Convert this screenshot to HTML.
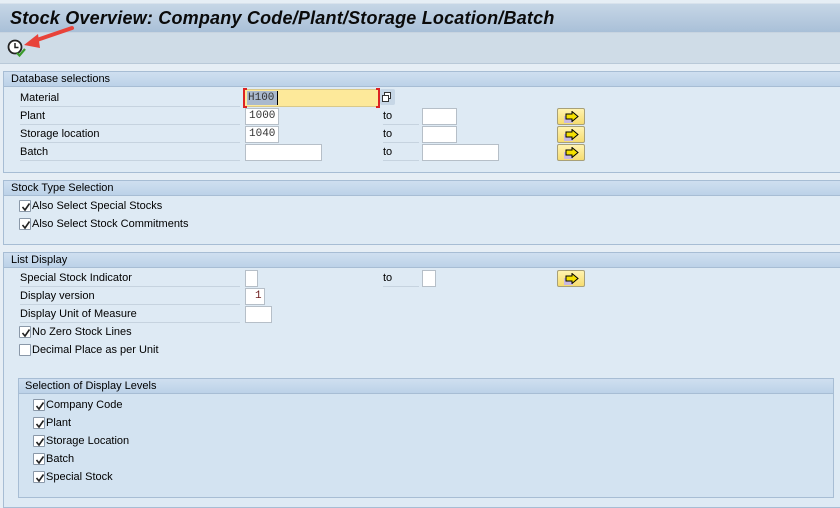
<!DOCTYPE html>
<html><head><meta charset="utf-8"><style>
*{margin:0;padding:0;box-sizing:border-box}
body{width:840px;height:499px;overflow:hidden;background:#e6eef5;font-family:"Liberation Sans",sans-serif;font-size:11px;color:#000;position:relative}
.a{position:absolute}
.title{left:0;top:3px;width:840px;height:30px;background:linear-gradient(#c6d6e6,#a9c0d8);border-top:1px solid #d8e2ec;border-bottom:1px solid #c8d4e0}
.title span{position:absolute;left:10px;top:4px;font-size:18px;font-weight:bold;font-style:italic;color:#0a0a0a;letter-spacing:0.2px}
.tb{left:0;top:33px;width:840px;height:31px;background:#cfdce7;border-bottom:1px solid #b9c9d8}
.hdr{left:3px;width:840px;height:16px;background:linear-gradient(#cfdff0,#bcd2e8);border:1px solid #a7bdd4;border-right:none;padding-left:7px;line-height:14px;font-size:11px}
.box{left:3px;width:840px;background:#deeaf4;border:1px solid #a7bdd4;border-top:none;border-right:none}
.lbl{left:20px;width:220px;height:17px;line-height:16px;border-bottom:1px solid #c6d3df}
.to{left:383px;width:36px;height:17px;line-height:16px;border-bottom:1px solid #c6d3df}
.in{height:17px;background:#fff;border:1px solid #b6bfc8;font-family:"Liberation Mono",monospace;font-size:11px;line-height:15px;padding-left:3px;color:#333}
.btn{left:557px;width:28px;height:17px;background:linear-gradient(#fff3b0,#f6dc70);border:1px solid #a8a078;border-radius:2px}
.btn i{position:absolute;left:6px;top:7px;width:9px;height:7px;background:#c8b8e0}
.btn svg{position:absolute;left:7px;top:2px}
.cb{width:12px;height:12px;background:#fff;border:1px solid #8a98a8;border-radius:1px}
.cb svg{position:absolute;left:1px;top:1px}
.ct{height:14px;line-height:14px}
</style></head><body>
<div class="a title"><span>Stock Overview: Company Code/Plant/Storage Location/Batch</span></div>
<div class="a tb"></div>
<svg class="a" style="left:6px;top:38px" width="20" height="20" viewBox="0 0 20 20">
<circle cx="9" cy="9" r="6.5" fill="#fff" stroke="#222" stroke-width="1.8"/>
<path d="M9 5v4.5h3.5" stroke="#222" stroke-width="1.5" fill="none"/>
<path d="M11 15l2.5 2.5L19 11" stroke="#3a9a2a" stroke-width="2.2" fill="none"/>
</svg>
<svg class="a" style="left:20px;top:24px" width="56" height="28" viewBox="0 0 56 28">
<path d="M52 4L14 17" stroke="#e8433a" stroke-width="4" stroke-linecap="round"/>
<path d="M4 21L18 10L20 24Z" fill="#e8433a"/>
</svg>

<div class="a hdr" style="top:71px">Database selections</div>
<div class="a box" style="top:87px;height:86px"></div>
<div class="a lbl" style="top:90px">Material</div>
<div class="a" style="left:244px;top:89px;width:135px;height:18px;background:#fde99a;border:1px solid #d9c98a"></div>
<div class="a" style="left:247px;top:91px;width:30px;height:14px;background:#aab9cd;font-family:'Liberation Mono',monospace;font-size:11px;line-height:14px;color:#333;padding-left:1px">H100</div>
<div class="a" style="left:277px;top:91px;width:1px;height:14px;background:#000"></div>
<div class="a" style="left:243px;top:88px;width:4px;height:20px;border:2px solid #d22;border-right:none"></div>
<div class="a" style="left:376px;top:88px;width:4px;height:20px;border:2px solid #d22;border-left:none"></div>
<div class="a" style="left:380px;top:89px;width:15px;height:16px;background:#c7d7e6;border-radius:2px"></div>
<div class="a" style="left:384px;top:92px;width:7px;height:7px;border:1px solid #333;background:#fff"></div>
<div class="a" style="left:382px;top:95px;width:7px;height:7px;border:1px solid #333;background:#fff"></div>

<div class="a lbl" style="top:108px">Plant</div>
<div class="a in" style="left:245px;top:108px;width:34px">1000</div>
<div class="a to" style="top:108px">to</div>
<div class="a in" style="left:422px;top:108px;width:35px"></div>
<div class="a btn" style="top:108px"><i></i><svg width="14" height="11" viewBox="0 0 14 11"><path d="M1 3h6V0.5L13 5.5 7 10.5V8H1Z" fill="#f4e000" stroke="#000" stroke-width="1"/></svg></div>

<div class="a lbl" style="top:126px">Storage location</div>
<div class="a in" style="left:245px;top:126px;width:34px">1040</div>
<div class="a to" style="top:126px">to</div>
<div class="a in" style="left:422px;top:126px;width:35px"></div>
<div class="a btn" style="top:126px"><i></i><svg width="14" height="11" viewBox="0 0 14 11"><path d="M1 3h6V0.5L13 5.5 7 10.5V8H1Z" fill="#f4e000" stroke="#000" stroke-width="1"/></svg></div>

<div class="a lbl" style="top:144px">Batch</div>
<div class="a in" style="left:245px;top:144px;width:77px"></div>
<div class="a to" style="top:144px">to</div>
<div class="a in" style="left:422px;top:144px;width:77px"></div>
<div class="a btn" style="top:144px"><i></i><svg width="14" height="11" viewBox="0 0 14 11"><path d="M1 3h6V0.5L13 5.5 7 10.5V8H1Z" fill="#f4e000" stroke="#000" stroke-width="1"/></svg></div>

<div class="a hdr" style="top:180px">Stock Type Selection</div>
<div class="a box" style="top:196px;height:49px"></div>
<div class="a cb" style="left:19px;top:200px"><svg width="10" height="10"><path d="M1.5 5l2.5 3L8.5 1.5" stroke="#222" stroke-width="1.6" fill="none"/></svg></div>
<div class="a ct" style="left:32px;top:199px">Also Select Special Stocks</div>
<div class="a cb" style="left:19px;top:218px"><svg width="10" height="10"><path d="M1.5 5l2.5 3L8.5 1.5" stroke="#222" stroke-width="1.6" fill="none"/></svg></div>
<div class="a ct" style="left:32px;top:217px">Also Select Stock Commitments</div>

<div class="a hdr" style="top:252px">List Display</div>
<div class="a box" style="top:268px;height:240px"></div>
<div class="a lbl" style="top:270px">Special Stock Indicator</div>
<div class="a in" style="left:245px;top:270px;width:13px"></div>
<div class="a to" style="top:270px">to</div>
<div class="a in" style="left:422px;top:270px;width:14px"></div>
<div class="a btn" style="top:270px"><i></i><svg width="14" height="11" viewBox="0 0 14 11"><path d="M1 3h6V0.5L13 5.5 7 10.5V8H1Z" fill="#f4e000" stroke="#000" stroke-width="1"/></svg></div>
<div class="a lbl" style="top:288px">Display version</div>
<div class="a in" style="left:245px;top:288px;width:20px;color:#6a1a1a;padding-left:9px">1</div>
<div class="a lbl" style="top:306px">Display Unit of Measure</div>
<div class="a in" style="left:245px;top:306px;width:27px"></div>
<div class="a cb" style="left:19px;top:326px"><svg width="10" height="10"><path d="M1.5 5l2.5 3L8.5 1.5" stroke="#222" stroke-width="1.6" fill="none"/></svg></div>
<div class="a ct" style="left:32px;top:325px">No Zero Stock Lines</div>
<div class="a cb" style="left:19px;top:344px"></div>
<div class="a ct" style="left:32px;top:343px">Decimal Place as per Unit</div>

<div class="a" style="left:18px;top:378px;width:816px;height:16px;background:linear-gradient(#cfdff0,#bcd2e8);border:1px solid #a7bdd4;padding-left:6px;line-height:14px">Selection of Display Levels</div>
<div class="a" style="left:18px;top:394px;width:816px;height:104px;background:#d3e3f1;border:1px solid #a7bdd4;border-top:none"></div>
<div class="a cb" style="left:33px;top:399px"><svg width="10" height="10"><path d="M1.5 5l2.5 3L8.5 1.5" stroke="#222" stroke-width="1.6" fill="none"/></svg></div>
<div class="a ct" style="left:46px;top:398px">Company Code</div>
<div class="a cb" style="left:33px;top:417px"><svg width="10" height="10"><path d="M1.5 5l2.5 3L8.5 1.5" stroke="#222" stroke-width="1.6" fill="none"/></svg></div>
<div class="a ct" style="left:46px;top:416px">Plant</div>
<div class="a cb" style="left:33px;top:435px"><svg width="10" height="10"><path d="M1.5 5l2.5 3L8.5 1.5" stroke="#222" stroke-width="1.6" fill="none"/></svg></div>
<div class="a ct" style="left:46px;top:434px">Storage Location</div>
<div class="a cb" style="left:33px;top:453px"><svg width="10" height="10"><path d="M1.5 5l2.5 3L8.5 1.5" stroke="#222" stroke-width="1.6" fill="none"/></svg></div>
<div class="a ct" style="left:46px;top:452px">Batch</div>
<div class="a cb" style="left:33px;top:471px"><svg width="10" height="10"><path d="M1.5 5l2.5 3L8.5 1.5" stroke="#222" stroke-width="1.6" fill="none"/></svg></div>
<div class="a ct" style="left:46px;top:470px">Special Stock</div>
</body></html>
